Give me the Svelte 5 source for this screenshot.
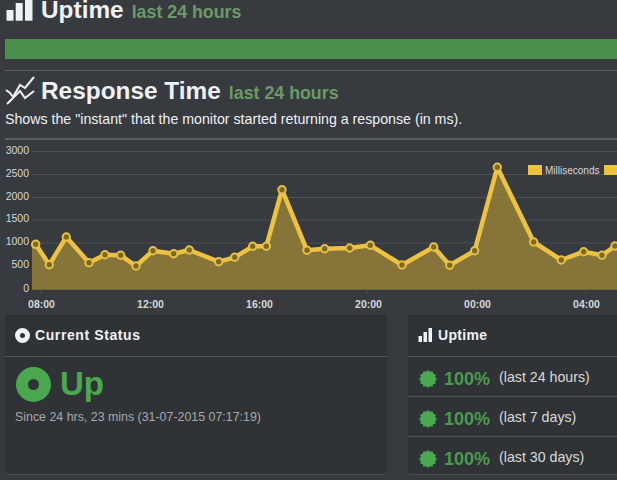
<script>
  const points = [[32,247],[35.7,244.3],[49.3,264.7],[66.3,237],[89,262.7],[105,254.7],[120.7,255.3],[136,266],[153,250.7],[173.7,253.7],[189.3,250],[218.7,261.7],[234.7,257.3],[252.7,246.3],[266.3,246.3],[282,189.7],[307,250.3],[324.7,248.7],[349.7,248],[370.3,245.3],[402,265],[433.7,247],[449.7,265.3],[474.7,250.7],[497.3,167.3],[533.7,242],[561.3,260],[583.7,251.7],[602,255.3],[615,246],[640,246]];
  const line = points.map((p) => p.join(',')).join(' ');
  const area = `32,289.5 ${line} 640,289.5`;
  const markers = points.slice(1, -1);
  const yAxis = [['3000', 11.5], ['2500', 34.5], ['2000', 57.5], ['1500', 80], ['1000', 103], ['500', 126], ['0', 149.5]];
  const xAxis = [['08:00', 40.5], ['12:00', 149.5], ['16:00', 258.5], ['20:00', 367.5], ['00:00', 476.5], ['04:00', 585.5]];
  const rows = [
    ['100%', '(last 24 hours)'],
    ['100%', '(last 7 days)'],
    ['100%', '(last 30 days)']
  ];
  const burst = (() => {
    const pts = [];
    const n = 12;
    for (let i = 0; i < n * 2; i++) {
      const r = i % 2 ? 7.4 : 9;
      const a = (Math.PI * i) / n;
      pts.push(`${(9 + r * Math.sin(a)).toFixed(2)},${(9 - r * Math.cos(a)).toFixed(2)}`);
    }
    return pts.join(' ');
  })();
</script>

<div class="page">
  <h2 class="heading first">
    <svg class="h-icon" width="36" height="30" viewBox="0 0 36 30" aria-hidden="true">
      <rect x="1.5" y="15" width="7" height="10.7" fill="#eef1f5" />
      <rect x="10.7" y="8" width="7" height="17.7" fill="#eef1f5" />
      <rect x="20" y="0" width="7.5" height="25.7" fill="#eef1f5" />
    </svg>
    <span>Uptime</span><small>last 24 hours</small>
  </h2>
  <div class="bar"></div>
  <hr />
  <h2 class="heading second">
    <svg class="h-icon" width="36" height="30" viewBox="0 0 36 30" aria-hidden="true">
      <path d="M2 28 L15 15 L20 22 L29 15" fill="none" stroke="#eef1f5" stroke-width="2" />
      <path d="M1 14 L5 17 L8 21 M8 21 L15 9 L20 12 L29 1" fill="none" stroke="#eef1f5" stroke-width="2" />
    </svg>
    <span>Response Time</span><small>last 24 hours</small>
  </h2>
  <p class="desc">Shows the "instant" that the monitor started returning a response (in ms).</p>
  <hr class="chart-rule" />

  <svg class="chart" width="617" height="174" viewBox="0 140 617 174" role="img" aria-label="Response time chart">
    <g transform="translate(0,140)">
      {#each yAxis as [label, y]}
        <line x1="32" x2="617" y1={y} y2={y} class="grid" />
        <text x="29" y={y + 2} text-anchor="end" class="tick">{label}</text>
      {/each}
      {#each xAxis as [label, x]}
        <line x1={x} x2={x} y1="149.5" y2="153" class="grid" />
        <text x={x + 1} y="167.5" text-anchor="middle" class="tick xtick">{label}</text>
      {/each}
    </g>
    <polygon points={area} fill="#867439" />
    {#each yAxis as [, y]}
      <line x1="32" x2="617" y1={y + 140} y2={y + 140} class="grid over" />
    {/each}
    <polyline points={line} class="series" />
    {#each markers as [x, y]}
      <circle cx={x} cy={y} r="3.7" class="marker" />
    {/each}
    <rect x="528" y="165" width="14" height="10" fill="#edc240" />
    <text x="545" y="174" class="legend">Milliseconds</text>
    <rect x="604" y="165" width="14" height="10" fill="#edc240" />
  </svg>

  <div class="panels">
    <section class="panel status">
      <header class="panel-head">
        <svg width="15" height="15" viewBox="0 0 15 15" aria-hidden="true">
          <circle cx="7.5" cy="7.5" r="5" fill="none" stroke="#eef1f5" stroke-width="5" />
        </svg>
        Current Status
      </header>
      <div class="status-body">
        <div class="state">
          <svg width="35" height="35" viewBox="0 0 35 35" aria-hidden="true">
            <circle cx="17.5" cy="17.5" r="11.5" fill="none" stroke="#4aa850" stroke-width="12" />
          </svg>
          <span>Up</span>
        </div>
        <p class="since">Since 24 hrs, 23 mins (31-07-2015 07:17:19)</p>
      </div>
    </section>

    <section class="panel uptime">
      <header class="panel-head">
        <svg width="15" height="15" viewBox="0 0 15 15" aria-hidden="true">
          <rect x="0.5" y="8" width="3.5" height="6" fill="#eef1f5" />
          <rect x="5.5" y="4" width="3.5" height="10" fill="#eef1f5" />
          <rect x="10.5" y="0" width="3.5" height="14" fill="#eef1f5" />
        </svg>
        Uptime
      </header>
      {#each rows as [pct, label]}
        <div class="row">
          <svg width="18" height="18" viewBox="0 0 18 18" aria-hidden="true">
            <polygon points={burst} fill="#4aa850" />
          </svg>
          <strong>{pct}</strong>
          <span>{label}</span>
        </div>
      {/each}
    </section>
  </div>
</div>

<style>
  :global(body) {
    margin: 0;
    background: #373a3e;
    overflow: hidden;
  }
  .page {
    width: 617px;
    height: 480px;
    overflow: hidden;
    font-family: "Liberation Sans", Arial, sans-serif;
    color: #eef1f5;
  }
  .heading {
    display: flex;
    align-items: baseline;
    margin: 0;
    padding-left: 5px;
    font-size: 24.4px;
    line-height: 30px;
    font-weight: 700;
    white-space: pre;
    color: #eef1f5;
  }
  .heading.first {
    margin-top: -5px;
    height: 44px;
  }
  .heading.second {
    padding-top: 5px;
    height: 33px;
  }
  .heading small {
    font-size: 17.8px;
    color: #6b9a67;
    margin-left: 8px;
  }
  .h-icon {
    flex: none;
    align-self: flex-start;
  }
  .bar {
    height: 20px;
    margin-left: 5px;
    background: #4a8f4c;
  }
  hr {
    height: 1px;
    border: 0;
    margin: 11px 0 0 5px;
    background: #5c5f62;
  }
  .desc {
    margin: 0;
    padding-left: 5px;
    font-size: 14.2px;
    line-height: 20px;
    color: #eef1f5;
  }
  .chart-rule {
    margin-top: 9px;
    height: 2px;
  }
  .chart {
    display: block;
  }
  .grid {
    stroke: #45494c;
    stroke-width: 1;
  }
  .grid.over {
    stroke: rgba(255, 255, 255, 0.05);
  }
  .tick {
    font-size: 10.5px;
    fill: #d6d8da;
  }
  .xtick {
    font-weight: 700;
    font-size: 10.5px;
  }
  .series {
    fill: none;
    stroke: #edc240;
    stroke-width: 4.5;
    stroke-linejoin: round;
  }
  .marker {
    fill: #7e6a1e;
    stroke: #e6c04c;
    stroke-width: 2;
  }
  .legend {
    font-size: 10px;
    fill: #d6d8dc;
  }
  .panels {
    display: flex;
    justify-content: space-between;
    margin-top: 1px;
    padding-left: 5px;
    height: 160px;
  }
  .panel {
    background: #303336;
    border-radius: 4px;
    border-bottom: 1px solid #4a4d50;
    box-sizing: border-box;
    height: 160px;
    box-shadow: inset 0 1px 1px #2a2d30;
  }
  .status {
    width: 382px;
  }
  .uptime {
    width: 214px;
    margin-right: -5px;
  }
  .panel-head {
    display: flex;
    align-items: center;
    gap: 5px;
    height: 42px;
    padding: 0 0 1px 10px;
    box-sizing: border-box;
    border-bottom: 1px solid #54575a;
    font-size: 14px;
    font-weight: 700;
    letter-spacing: 0.6px;
  }
  .uptime .panel-head {
    letter-spacing: 0.3px;
  }
  .status-body {
    padding: 9px 11px 0;
  }
  .state {
    display: flex;
    align-items: center;
    gap: 9px;
    color: #4aa850;
    font-size: 33px;
    font-weight: 700;
    line-height: 36px;
  }
  .since {
    margin: 8px 0 0 -1px;
    font-size: 12.4px;
    color: #a6a9ac;
  }
  .row {
    display: flex;
    align-items: center;
    height: 40px;
    padding-left: 11px;
    box-sizing: border-box;
    border-bottom: 1px solid #4d5053;
    font-size: 14.2px;
    color: #d8dadc;
  }
  .row:last-child {
    border-bottom: 0;
  }
  .row svg {
    margin-top: 4px;
  }
  .row strong {
    margin: 5px 9px 0 7px;
    font-size: 18px;
    color: #4a9a50;
  }
</style>
